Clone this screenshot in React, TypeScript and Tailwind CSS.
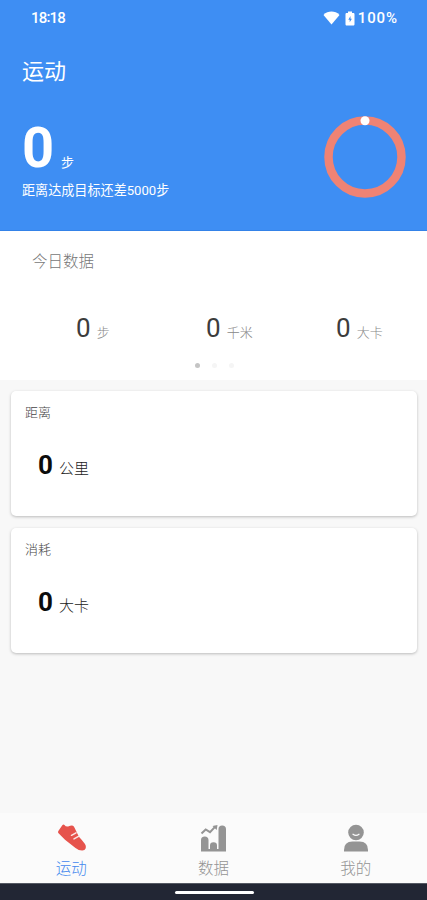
import type { ReactNode } from "react";

interface MetricProps {
  unit: string;
}

interface StatCardProps {
  title: string;
  unit: string;
}

interface TabProps {
  label: string;
  active?: boolean;
  children: ReactNode;
}

const StatusBar = () => (
  <div className="flex h-9 items-center justify-between pr-[29px] pl-[31px] text-[15px] leading-9 font-medium">
    <span className="flex tracking-[-0.8px]">
      18<span className="-mt-px">:</span>18
    </span>
    <div className="flex items-center">
      <svg width="17" height="14" viewBox="0 0 17 14" fill="currentColor">
        <path d="M8.5 13.6 0.5 3.9C5 -0.5 12 -0.5 16.5 3.9Z" />
      </svg>
      <svg className="ml-[5px]" width="10" height="15" viewBox="0 0 10 15">
        <path
          fill="currentColor"
          d="M3 0.5h4V2h1.2C9 2 9.5 2.5 9.5 3.3v10c0 .8-.5 1.2-1.3 1.2H1.8c-.8 0-1.3-.4-1.3-1.2v-10C.5 2.5 1 2 1.8 2H3Z"
        />
        <path fill="#3e8ef3" d="M5.5 5 3.3 8.7h1.4v2.6L6.9 7.7H5.5Z" />
      </svg>
      <span className="ml-[3px] tracking-[0.9px]">100%</span>
    </div>
  </div>
);

const GoalRing = () => (
  <svg width="82" height="82" viewBox="0 0 82 82" fill="none">
    <circle cx="41" cy="41" r="36.5" stroke="#ef8374" strokeWidth="8.5" />
    <circle cx="41" cy="4.7" r="4.5" fill="white" />
  </svg>
);

const Metric = ({ unit }: MetricProps) => (
  <div className="flex w-[130px] shrink-0 items-baseline">
    <span className="text-[26px] leading-8 text-[#3c3c3c]">0</span>
    <span className="ml-[6px] text-[13px] font-light text-[#888]">{unit}</span>
  </div>
);

const StatCard = ({ title, unit }: StatCardProps) => (
  <section className="h-[125px] rounded-[5px] bg-white px-[14px] pt-3 shadow-[0_1px_3px_rgba(0,0,0,0.25)]">
    <h2 className="text-[13px] leading-5 font-light text-[#444]">{title}</h2>
    <div className="mt-[26px] flex items-baseline pl-[13px]">
      <span className="text-[26px] leading-8 font-bold text-[#0c0c0c]">0</span>
      <span className="ml-[6px] text-[15px] font-light text-[#222]">{unit}</span>
    </div>
  </section>
);

const Tab = ({ label, active, children }: TabProps) => (
  <div
    className={`flex flex-1 flex-col items-center pt-[10px] ${active ? "text-[#4388ee]" : "text-[#949494]"}`}
  >
    {children}
    <span className="mt-[5px] text-[15.5px] leading-5 font-light">{label}</span>
  </div>
);

const App = () => (
  <div className="flex h-[900px] w-[427px] flex-col overflow-hidden bg-[#f8f8f8] font-['Roboto','Noto_Sans_CJK_SC',sans-serif]">
    <header className="h-[231px] border-b border-[#3482e8] bg-[#3e8ef3] text-white">
      <StatusBar />
      <h1 className="mt-5 pl-[22px] text-[22px] leading-8">运动</h1>
      <div className="flex justify-between pr-[21px] pl-[22px]">
        <div className="pt-7">
          <div className="flex items-baseline">
            <span className="w-[32px] text-[56px] leading-[64px] font-bold">0</span>
            <span className="ml-[7px] text-[13px]">步</span>
          </div>
          <p className="mt-px text-[13.1px] leading-5">距离达成目标还差5000步</p>
        </div>
        <div className="pt-7">
          <GoalRing />
        </div>
      </div>
    </header>

    <section className="flex h-[149px] flex-col bg-white">
      <h2 className="pt-[21px] pl-[32px] text-[15.5px] leading-5 font-light text-[#777]">今日数据</h2>
      <div className="mt-10 flex pl-[76px]">
        <Metric unit="步" />
        <Metric unit="千米" />
        <Metric unit="大卡" />
      </div>
      <div className="mt-[19px] flex justify-center gap-3 pl-px">
        <i className="size-[5px] rounded-full bg-[#c4c4c4]" />
        <i className="size-[5px] rounded-full bg-[#f5f5f5]" />
        <i className="size-[5px] rounded-full bg-[#f5f5f5]" />
      </div>
    </section>

    <main className="flex flex-1 flex-col gap-3 pt-[11px] pr-[10px] pl-[11px]">
      <StatCard title="距离" unit="公里" />
      <StatCard title="消耗" unit="大卡" />
    </main>

    <nav className="flex h-[70px] bg-[#fbfbfb]">
      <Tab label="运动" active>
        <svg width="30" height="31" viewBox="0 0 30 31">
          <path
            fill="#e6534c"
            d="M2.3 10q-.6-1.1.2-2.3L6.3 2.3q1.1-1.2 2.2-.3 1 1.7 3.6 1.5 2.4-1 4-.9 1.5.2 2.2 1.6l4 8.3q1 1.9 3.1 4l3.4 4.2q1.6 2.3.8 4.8-.7 2.1-3.3 2.1-3.500.1-6.800-2.500L9 16.700Z"
          />
          <path stroke="#fbe5e3" strokeWidth="1.5" strokeLinecap="round" d="m15.5 12.3 4.5-2.5M18 15.9l4.500-2.500" />
        </svg>
      </Tab>
      <Tab label="数据">
        <svg width="30" height="31" viewBox="0 0 30 31" fill="currentColor">
          <path d="M3 28.5V17q0-3.5 3.7-3.5t3.800 3.500v11.500ZM12 28.500v-6q0-3.200 3.500-3.200t3.500 3.200v6ZM20.500 28.500V6q0-3.500 3.700-3.500T28 6v22.500ZM9 26h13v2.500H9Z" />
          <path fill="none" stroke="currentColor" strokeWidth="2" d="m3.5 10.5 4.2-4 4.3 2.700 5.500-5.800" />
          <path d="m14.5 3 5-1-.8 5Z" />
        </svg>
      </Tab>
      <Tab label="我的">
        <svg width="30" height="31" viewBox="0 0 30 31" fill="currentColor">
          <circle cx="15" cy="9.5" r="7.8" />
          <path d="M3 28.5V27q0-8.5 8.5-8.5h7q8.500 0 8.500 8.500v1.500Z" />
          <path fill="none" stroke="#fbfbfb" strokeWidth="1.3" strokeLinecap="round" d="M12 11.3q3 2.300 6 0" />
        </svg>
      </Tab>
    </nav>
    <footer className="flex h-[17px] justify-center border-t border-[#555963] bg-[#222634] pt-[7px] pl-px">
      <div className="h-[3px] w-[79px] rounded-full bg-white" />
    </footer>
  </div>
);

export default App;
